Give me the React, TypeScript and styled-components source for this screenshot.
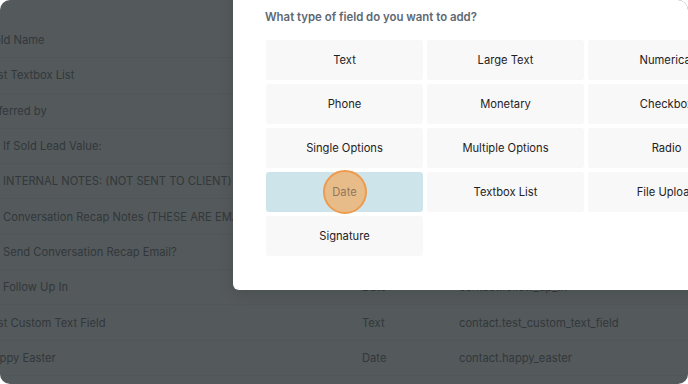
import styled, { createGlobalStyle } from "styled-components";

const GlobalStyle = createGlobalStyle`
  html, body {
    margin: 0;
    padding: 0;
    background: #ffffff;
  }
  body {
    font-family: Inter, "Noto Sans", "Liberation Sans", sans-serif;
  }
`;

const Frame = styled.div`
  position: relative;
  width: 688px;
  height: 384px;
  border-radius: 10px;
  overflow: hidden;
  background: #ffffff;
`;

const Table = styled.div`
  display: flex;
  flex-direction: column;
  padding-top: 23px;
  margin-left: -15px;
`;

const Row = styled.div`
  display: grid;
  grid-template-columns: 377px 97px 1fr;
  align-items: center;
  height: 35.3px;
  border-bottom: 1px solid #f3f4f5;
  box-sizing: border-box;
  font-size: 11.2px;
  color: #8c9194;
  white-space: nowrap;
`;

const NameCell = styled.div<{ $indent?: boolean }>`
  padding-left: ${(p) => (p.$indent ? "18px" : "0")};
  overflow: hidden;
`;

const Backdrop = styled.div`
  position: absolute;
  inset: 0;
  background: rgba(12, 18, 22, 0.7);
`;

const Modal = styled.div`
  position: absolute;
  left: 233px;
  top: -40px;
  width: 545px;
  height: 330px;
  background: #ffffff;
  border-radius: 6px;
  box-shadow: 0 4px 16px rgba(0, 0, 0, 0.12);
  box-sizing: border-box;
  padding: 50px 32px 0 32px;
`;

const Title = styled.div`
  font-size: 11.4px;
  font-weight: 600;
  color: #5d6873;
  margin-bottom: 16px;
`;

const Grid = styled.div`
  display: grid;
  grid-template-columns: repeat(3, 157px);
  grid-auto-rows: 40px;
  gap: 4px;
  margin-left: 1px;
`;

const Cell = styled.div<{ $active?: boolean }>`
  position: relative;
  display: flex;
  align-items: center;
  justify-content: center;
  border-radius: 3px;
  background: ${(p) => (p.$active ? "#cde5ea" : "#f8f8f8")};
  font-size: 11.2px;
  color: #1f2224;
`;

const Label = styled.span<{ $dim?: boolean }>`
  position: relative;
  opacity: ${(p) => (p.$dim ? 0.45 : 1)};
`;

const ClickMark = styled.span`
  position: absolute;
  left: 50%;
  top: 50%;
  width: 40px;
  height: 40px;
  transform: translate(-50%, -50%);
  border-radius: 50%;
  background: rgba(245, 168, 92, 0.68);
  border: 2px solid #ef9a4c;
`;

const rows: { name: string; type: string; key: string; indent?: boolean }[] = [
  { name: "Field Name", type: "", key: "" },
  { name: "Test Textbox List", type: "Textbox List", key: "contact.test_textbox_list" },
  { name: "Referred by", type: "Text", key: "contact.referred_by" },
  { name: "If Sold Lead Value:", type: "Monetary", key: "contact.if_sold_lead_value", indent: true },
  { name: "INTERNAL NOTES: (NOT SENT TO CLIENT)", type: "Large Text", key: "contact.internal_notes", indent: true },
  { name: "Conversation Recap Notes (THESE ARE EMAILED TO CLIENT)", type: "Large Text", key: "contact.conversation_recap", indent: true },
  { name: "Send Conversation Recap Email?", type: "Checkbox", key: "contact.send_recap_email", indent: true },
  { name: "Follow Up In", type: "Date", key: "contact.follow_up_in", indent: true },
  { name: "Test Custom Text Field", type: "Text", key: "contact.test_custom_text_field" },
  { name: "Happy Easter", type: "Date", key: "contact.happy_easter" },
];

const fieldTypes = [
  "Text",
  "Large Text",
  "Numerical",
  "Phone",
  "Monetary",
  "Checkbox",
  "Single Options",
  "Multiple Options",
  "Radio",
  "Date",
  "Textbox List",
  "File Upload",
  "Signature",
];

export default function App() {
  return (
    <>
      <GlobalStyle />
      <Frame>
        <Table>
          {rows.map((r) => (
            <Row key={r.name}>
              <NameCell $indent={r.indent}>{r.name}</NameCell>
              <div>{r.type}</div>
              <div>{r.key}</div>
            </Row>
          ))}
        </Table>
        <Backdrop />
        <Modal>
          <Title>What type of field do you want to add?</Title>
          <Grid>
            {fieldTypes.map((t) => (
              <Cell key={t} $active={t === "Date"}>
                {t === "Date" && <ClickMark />}
                <Label $dim={t === "Date"}>{t}</Label>
              </Cell>
            ))}
          </Grid>
        </Modal>
      </Frame>
    </>
  );
}
